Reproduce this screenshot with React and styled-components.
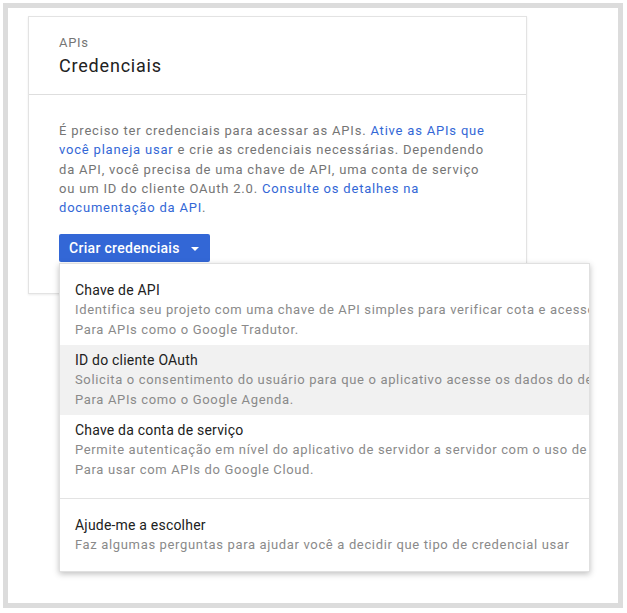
import React from 'react';
import styled, {createGlobalStyle} from 'styled-components';

const GlobalStyle = createGlobalStyle`
  html, body {
    margin: 0;
    padding: 0;
    background: #fff;
    font-family: Roboto, "Liberation Sans", Arial, sans-serif;
  }
`;

const Frame = styled.div`
  margin: 3px;
  width: 620px;
  height: 605px;
  box-sizing: border-box;
  border: 5px solid #dcdcdc;
  background: #fff;
  padding: 8px 0 0 20px;
`;

const Card = styled.div`
  width: 499px;
  height: 278px;
  box-sizing: border-box;
  border: 1px solid #e3e3e3;
  box-shadow: 0 1px 2px rgba(0,0,0,0.08);
  background: #fff;
`;

const CardHeader = styled.div`
  height: 78px;
  box-sizing: border-box;
  border-bottom: 1px solid #dedede;
  padding: 17px 30px 0 30px;
`;

const Eyebrow = styled.div`
  font-size: 13px;
  line-height: 17px;
  letter-spacing: 0.7px;
  color: #757575;
`;

const Title = styled.div`
  font-size: 18px;
  line-height: 24px;
  letter-spacing: 0.8px;
  margin-top: 3px;
  color: #212121;
`;

const CardBody = styled.div`
  padding: 26px 30px 0 30px;
`;

const Paragraph = styled.p`
  margin: 0;
  font-size: 13px;
  line-height: 19.3px;
  letter-spacing: 0.8px;
  color: #757575;
  white-space: nowrap;
`;

const Link = styled.a`
  color: #3367d6;
  text-decoration: none;
  cursor: pointer;
`;

const ButtonWrap = styled.div`
  position: relative;
  width: fit-content;
  margin-top: 17px;
`;

const Button = styled.button`
  display: flex;
  align-items: center;
  gap: 11px;
  height: 28px;
  padding: 0 11px 0 10px;
  border: none;
  border-radius: 2px;
  background: #3367d6;
  color: #fff;
  font-family: Roboto, "Liberation Sans", Arial, sans-serif;
  font-size: 14px;
  font-weight: 500;
  letter-spacing: 0.3px;
  cursor: pointer;
`;

const Caret = styled.span`
  width: 0;
  height: 0;
  border-left: 4px solid transparent;
  border-right: 4px solid transparent;
  border-top: 4px solid #fff;
  margin-top: 1px;
`;

const Menu = styled.div`
  position: absolute;
  top: 29px;
  left: 0;
  width: 531px;
  box-sizing: border-box;
  background: #fff;
  border: 1px solid #e0e0e0;
  box-shadow: 0 2px 6px rgba(0,0,0,0.25);
  overflow: hidden;
  z-index: 10;
`;

const Section = styled.div`
  padding: ${p => (p.$last ? '11px 0 11px 0' : '11px 0 13px 0')};
  border-top: ${p => (p.$last ? '1px solid #e3e3e3' : 'none')};
`;

const Item = styled.div`
  padding: 5px 0 5px 15px;
  background: ${p => (p.$active ? '#f1f1f1' : 'transparent')};
  white-space: nowrap;
  cursor: pointer;
`;

const ItemTitle = styled.div`
  font-size: 14px;
  line-height: 20px;
  letter-spacing: 0.2px;
  color: #212121;
`;

const ItemDesc = styled.div`
  font-size: 13px;
  line-height: 20px;
  letter-spacing: 0.65px;
  color: #8a8a8a;
`;

const items = [
  {
    title: 'Chave de API',
    lines: [
      'Identifica seu projeto com uma chave de API simples para verificar cota e acesso.',
      'Para APIs como o Google Tradutor.',
    ],
  },
  {
    title: 'ID do cliente OAuth',
    active: true,
    lines: [
      'Solicita o consentimento do usuário para que o aplicativo acesse os dados do departamento.',
      'Para APIs como o Google Agenda.',
    ],
  },
  {
    title: 'Chave da conta de serviço',
    lines: [
      'Permite autenticação em nível do aplicativo de servidor a servidor com o uso de contas robôs.',
      'Para usar com APIs do Google Cloud.',
    ],
  },
];

function MenuItem({title, lines, active}) {
  return (
    <Item $active={active}>
      <ItemTitle>{title}</ItemTitle>
      {lines.map(l => <ItemDesc key={l}>{l}</ItemDesc>)}
    </Item>
  );
}

export default function App() {
  return (
    <>
      <GlobalStyle />
      <Frame>
        <Card>
          <CardHeader>
            <Eyebrow>APIs</Eyebrow>
            <Title>Credenciais</Title>
          </CardHeader>
          <CardBody>
            <Paragraph>
              É preciso ter credenciais para acessar as APIs. <Link>Ative as APIs que</Link><br />
              <Link>você planeja usar</Link> e crie as credenciais necessárias. Dependendo<br />
              da API, você precisa de uma chave de API, uma conta de serviço<br />
              ou um ID do cliente OAuth 2.0. <Link>Consulte os detalhes na</Link><br />
              <Link>documentação da API</Link>.
            </Paragraph>
            <ButtonWrap>
              <Button>Criar credenciais <Caret /></Button>
              <Menu>
                <Section>
                  {items.map(it => <MenuItem key={it.title} {...it} />)}
                </Section>
                <Section $last>
                  <MenuItem
                    title="Ajude-me a escolher"
                    lines={['Faz algumas perguntas para ajudar você a decidir que tipo de credencial usar']}
                  />
                </Section>
              </Menu>
            </ButtonWrap>
          </CardBody>
        </Card>
      </Frame>
    </>
  );
}
